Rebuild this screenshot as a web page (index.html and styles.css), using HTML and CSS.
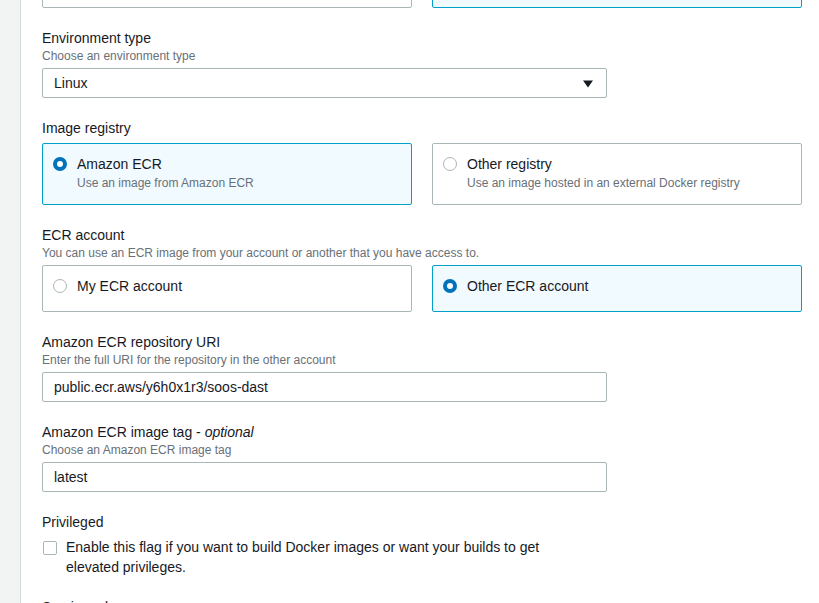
FILE: index.html
```html
<!DOCTYPE html>
<html lang="en">
<head>
<meta charset="utf-8">
<title>Environment</title>
<link rel="stylesheet" href="styles.css">
</head>
<body>
<div class="layout">
  <aside class="rail"></aside>
  <main class="content">
    <div class="tiles tiles-cut">
      <div class="tile"></div>
      <div class="tile selected"></div>
    </div>

    <div class="field">
      <div class="label">Environment type</div>
      <div class="desc">Choose an environment type</div>
      <div class="control select">
        <span>Linux</span>
        <svg class="caret" width="12" height="8" viewBox="0 0 12 8"><path d="M1 0.5 H11 L6 7.5 Z" fill="#16191f"/></svg>
      </div>
    </div>

    <div class="field">
      <div class="label solo">Image registry</div>
      <div class="tiles">
        <div class="tile selected">
          <span class="radio checked"></span>
          <div class="tile-text">
            <div class="tile-title">Amazon ECR</div>
            <div class="tile-desc">Use an image from Amazon ECR</div>
          </div>
        </div>
        <div class="tile">
          <span class="radio"></span>
          <div class="tile-text">
            <div class="tile-title">Other registry</div>
            <div class="tile-desc">Use an image hosted in an external Docker registry</div>
          </div>
        </div>
      </div>
    </div>

    <div class="field">
      <div class="label">ECR account</div>
      <div class="desc">You can use an ECR image from your account or another that you have access to.</div>
      <div class="tiles">
        <div class="tile compact">
          <span class="radio"></span>
          <div class="tile-text">
            <div class="tile-title">My ECR account</div>
          </div>
        </div>
        <div class="tile compact selected">
          <span class="radio checked"></span>
          <div class="tile-text">
            <div class="tile-title">Other ECR account</div>
          </div>
        </div>
      </div>
    </div>

    <div class="field">
      <div class="label">Amazon ECR repository URI</div>
      <div class="desc">Enter the full URI for the repository in the other account</div>
      <div class="control input">public.ecr.aws/y6h0x1r3/soos-dast</div>
    </div>

    <div class="field">
      <div class="label">Amazon ECR image tag - <i>optional</i></div>
      <div class="desc">Choose an Amazon ECR image tag</div>
      <div class="control input">latest</div>
    </div>

    <div class="field">
      <div class="label">Privileged</div>
      <div class="check-row">
        <span class="checkbox"></span>
        <span class="check-text">Enable this flag if you want to build Docker images or want your builds to get elevated privileges.</span>
      </div>
    </div>

    <div class="field">
      <div class="label">Service role</div>
    </div>
  </main>
</div>
</body>
</html>
```

FILE: styles.css
```css
* { box-sizing: border-box; }
html, body {
  margin: 0;
  padding: 0;
  background: #ffffff;
  overflow: hidden;
}
body {
  font-family: "Liberation Sans", Arial, sans-serif;
  color: #16191f;
  font-size: 14px;
  height: 603px;
}
.layout {
  display: flex;
  height: 603px;
}
.rail {
  width: 21px;
  flex: 0 0 21px;
  background: #f2f3f3;
  border-right: 1px solid #d5dbdb;
}
.content {
  width: 760px;
  margin-left: 21px;
}
.tiles {
  display: flex;
  gap: 20px;
}
.tiles-cut {
  height: 8px;
  overflow: hidden;
  align-items: flex-end;
}
.tiles-cut .tile {
  height: 40px;
}
.tile {
  flex: 0 0 370px;
  width: 370px;
  border: 1px solid #aab7b8;
  border-radius: 2px;
  background: #ffffff;
  display: flex;
  align-items: flex-start;
  padding: 9px 10px 13px 10px;
}
.tile.compact {
  padding-bottom: 14px;
}
.tile.selected {
  border-color: #00a1c9;
  background: #f1faff;
}
.radio {
  flex: 0 0 14px;
  width: 14px;
  height: 14px;
  border-radius: 50%;
  border: 1px solid #aab7b8;
  background: #fff;
  margin-top: 4px;
  margin-right: 10px;
}
.radio.checked {
  border: 4px solid #0073bb;
  background: #fff;
}
.tile-title {
  font-size: 14px;
  line-height: 22px;
  color: #16191f;
}
.tile-desc {
  font-size: 12px;
  line-height: 16px;
  color: #687078;
}
.field {
  margin-top: 20px;
}
.label {
  font-size: 14px;
  line-height: 20px;
  color: #16191f;
  margin-bottom: 4px;
}
.label.solo {
  margin-bottom: 5px;
}
.label i {
  font-style: italic;
}
.desc {
  font-size: 12px;
  line-height: 16px;
  color: #687078;
  margin-top: -4px;
  margin-bottom: 4px;
}
.control {
  width: 565px;
  height: 30px;
  border: 1px solid #aab7b8;
  border-radius: 2px;
  padding: 0 11px;
  display: flex;
  align-items: center;
  font-size: 14px;
  color: #16191f;
  background: #fff;
}
.select {
  justify-content: space-between;
}
.caret {
  margin-right: 1px;
  margin-top: 1px;
}
.check-row {
  display: flex;
  align-items: flex-start;
  margin-top: 5px;
  width: 540px;
}
.checkbox {
  flex: 0 0 14px;
  width: 14px;
  height: 14px;
  border: 1px solid #aab7b8;
  border-radius: 2px;
  background: #fff;
  margin-left: 1px;
  margin-top: 4px;
  margin-right: 9px;
}
.check-text {
  font-size: 14px;
  line-height: 20px;
  color: #16191f;
}
```
